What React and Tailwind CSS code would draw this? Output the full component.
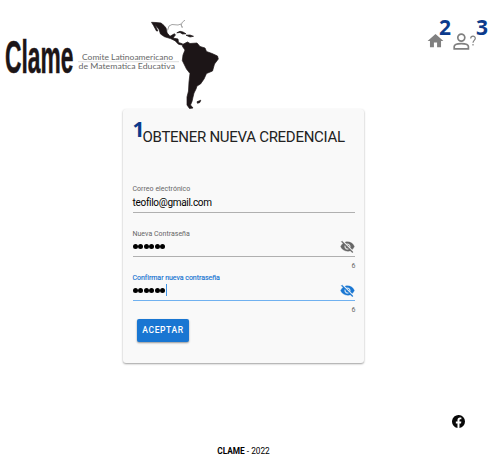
import React from "react";

function Logo() {
  return (
    <svg width="222" height="109" viewBox="0 0 222 109" className="block shrink-0">
      <g transform="translate(5 73.3) scale(1 1.66)">
        <text x="0" y="0" fontFamily="'Liberation Sans', Arial, sans-serif" fontWeight="700" fontSize="28" textLength="68.5" lengthAdjust="spacingAndGlyphs" fill="#1c1517" stroke="#1c1517" strokeWidth=".3">Clame</text>
      </g>
      <g fontFamily="Lato, sans-serif" fill="#686868">
        <text x="82" y="59.8" fontSize="7.6" textLength="91" lengthAdjust="spacingAndGlyphs">Comite Latinoamericano</text>
        <text x="78.5" y="69.2" fontSize="7.6" textLength="96.5" lengthAdjust="spacingAndGlyphs">de Matematica Educativa</text>
      </g>
      <path d="M78 61.7H179" stroke="#c4c4c4" strokeWidth=".6" />
      <g fill="#1c1517" stroke="#1c1517" strokeWidth=".7" strokeLinejoin="round">
        <path d="M151.5 22.3L156 22.5L161 23L164 25.5L166 28L167.2 33L170 36.3L174.3 33.8L175.5 34.8L173 38L178 39L178.5 42.5L182.5 43.8L182 45L178.5 44.3L175 40.7L170.5 38.6L164.5 36.7L160.5 34L159 29.5L155 24.5L157.8 31L156.5 31L153.5 25.5Z" />
        <path d="M182.5 44.5L187.5 42L190 43.5L197 43L200 46.5L205 48L206.5 51.5L212 53.5L217.5 56L218.3 59L214.5 64L212.5 71L206.5 73.5L204 79L200.5 84L197 86L196 89L194 93L193 97L192 101.5L190.5 105L193 108L189.5 108.5L187 105L187 97L188.5 91L189 82L190 73.5L186.5 69L182.3 60.5L183 55L185 50L182.5 46.5Z" />
        <path d="M176.8 32.8L180 31.3L183 32L186 33.8L182.5 34L180 32.5ZM186 35.2L190 35L193.5 36.3L190 37ZM197 101.8L200.8 100.2L199.8 102.5L197.5 103.3Z" />
      </g>
      <path d="M167.5 30.5L169 26L172 24.5L178 25L181 24L182.3 28M182.3 27L181 25L182.5 22L185 20.2" fill="none" stroke="#a5a5a5" strokeWidth="1" />
    </svg>
  );
}

function HiddenEye({ className }) {
  return (
    <svg viewBox="0 0 24 24" className={className} fill="currentColor" stroke="currentColor" strokeWidth=".5">
      <path d="M12 7c2.76 0 5 2.24 5 5 0 .65-.13 1.26-.36 1.83l2.92 2.92c1.51-1.26 2.7-2.89 3.43-4.75-1.73-4.39-6-7.5-11-7.5-1.4 0-2.74.25-3.98.7l2.16 2.16C10.74 7.13 11.35 7 12 7zM2 4.27l2.28 2.28.46.46C3.08 8.3 1.78 10.02 1 12c1.73 4.39 6 7.5 11 7.5 1.55 0 3.03-.3 4.38-.84l.42.42L19.73 22 21 20.73 3.27 3 2 4.27zM7.53 9.8l1.55 1.55c-.05.21-.08.43-.08.65 0 1.66 1.34 3 3 3 .22 0 .44-.03.65-.08l1.55 1.55c-.67.33-1.41.53-2.2.53-2.76 0-5-2.24-5-5 0-.79.2-1.53.53-2.2zm4.31-.78l3.15 3.15.02-.16c0-1.66-1.34-3-3-3l-.17.01z" />
    </svg>
  );
}

function PasswordField({ label, focused }) {
  return (
    <div className="h-[44px]">
      <div className={`h-[9px] whitespace-nowrap pt-px text-[7px] leading-[9px] ${focused ? "text-[#1976d2] tracking-[-0.03px] [-webkit-text-stroke:0.15px]" : "text-[#666] tracking-[0.01px]"}`}>{label}</div>
      <div className={`flex h-[19px] items-center justify-between border-b-[1.5px] pb-[2px] ${focused ? "border-[#70b1f0]" : "border-[#b0b0b0]"}`}>
        <div className="flex h-[12px] items-center gap-[0.6px]">
          {[0, 1, 2, 3, 4, 5].map((n) => <i key={n} className="size-[5px] rounded-full bg-black" />)}
          {focused && <span className="h-[12px] w-px bg-[#4095e8]" />}
        </div>
        <HiddenEye className={focused ? "size-[15px] text-[#1976d2]" : "size-[15px] text-[#666]"} />
      </div>
      <div className="mt-[4px] -mr-px h-[10px] text-right text-[7px] leading-[10px] text-[#666]">6</div>
    </div>
  );
}

const number = "font-['Noto_Sans',sans-serif] text-[21px] leading-[22px] font-bold text-[#0c3b8c]";

export default function App() {
  return (
    <div className="h-[459px] w-[489px] overflow-hidden bg-white font-[Roboto,sans-serif]">
      <header className="flex h-[109px] justify-between">
        <Logo />
        <div className="flex pt-[16px]">
          <svg viewBox="0 0 24 24" className="mt-[15px] h-[20px] w-[19px]" fill="#808080">
            <path d="M10 20v-6h4v6h5v-8h3L12 3 2 12h3v8z" />
          </svg>
          <span className={`${number} -ml-[6px] w-[14px]`}>2</span>
          <svg viewBox="0 0 24 18" className="mt-[17px] h-[18px] w-[24px]" fill="none" stroke="#808080">
            <circle cx="8.3" cy="4.6" r="3.5" strokeWidth="1.7" />
            <path d="M1.2 15.8V13.6C1.2 11.8 4.2 10.6 8.3 10.6S15.4 11.8 15.4 13.6V15.8Z" strokeWidth="1.7" />
            <path d="M17.7 5.6C17.7 2.4 22.3 2.5 22.3 5.3C22.3 7.4 20 7.5 20 9.8M20 11V12.6" strokeWidth="1.2" />
          </svg>
          <span className={`${number} -ml-px w-[13px]`}>3</span>
        </div>
      </header>

      <main className="ml-[123px] h-[254px] w-[241px] rounded-[3px] bg-[#f9f9f9] px-[9.5px] pt-[9px] shadow-[0_1px_2px_rgba(0,0,0,0.38)]">
        <div className="flex h-[66px]">
          <span className={`${number} w-[10px] shrink-0`}>1</span>
          <h1 className="mt-[9px] whitespace-nowrap text-[15px] leading-[20px] tracking-[-0.28px] text-[#222]">OBTENER NUEVA CREDENCIAL</h1>
        </div>
        <div className="h-[45px]">
          <div className="h-[9px] pt-px text-[7px] leading-[9px] tracking-[0.03px] text-[#666]">Correo electrónico</div>
          <div className="h-[20px] border-b-[1.5px] border-[#b0b0b0] pt-[3px] text-[10px] leading-[14px] tracking-[-0.3px] text-black">teofilo@gmail.com</div>
        </div>
        <PasswordField label="Nueva Contraseña" />
        <PasswordField label="Confirmar nueva contraseña" focused />
        <button className="mt-[2px] ml-[4.5px] flex h-[23px] w-[52px] items-center justify-center rounded-[2px] bg-[#1976d2] text-[8.5px] font-medium tracking-[0.6px] text-white shadow-[0_1px_2px_rgba(0,0,0,0.4)]">ACEPTAR</button>
      </main>

      <footer className="pt-[52px]">
        <div className="flex h-[13px] justify-end pr-[24px]">
          <svg viewBox="0 0 24 24" className="size-[13px]" fill="#080808">
            <path d="M24 12A12 12 0 1 0 10.1 23.9V15.5H7.1V12h3V9.4c0-3 1.8-4.7 4.5-4.7 1.3 0 2.7.2 2.7.2v3h-1.5c-1.5 0-2 .9-2 1.9V12h3.4l-.5 3.5h-2.9v8.4A12 12 0 0 0 24 12" />
          </svg>
        </div>
        <p className="mt-[17px] pr-[2px] text-center text-[8.3px] leading-[12px] text-black"><strong>CLAME</strong> - 2022</p>
      </footer>
    </div>
  );
}
